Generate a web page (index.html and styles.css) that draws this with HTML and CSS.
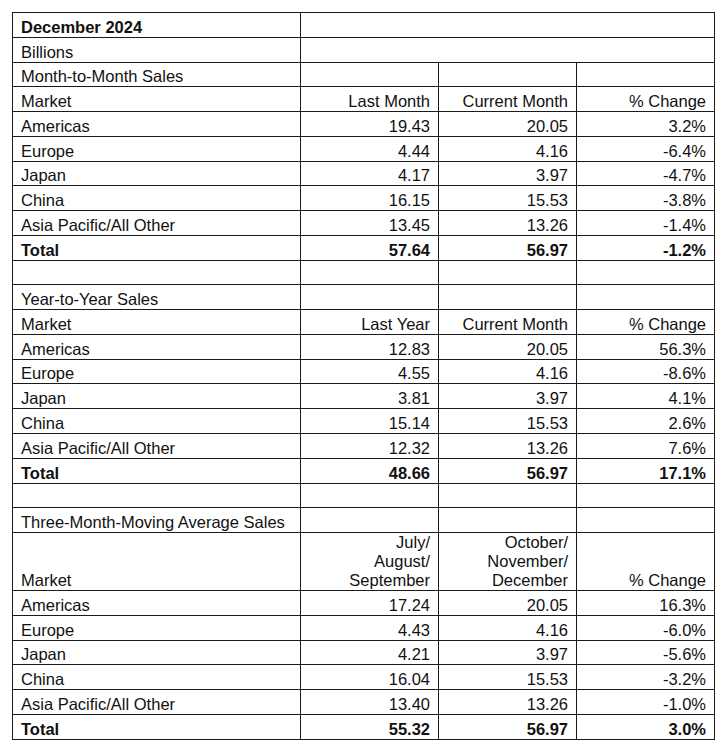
FILE: index.html
```html
<!DOCTYPE html>
<html lang="en">
<head>
    <meta charset="UTF-8">
    <title>December 2024</title>
    <link rel="stylesheet" href="styles.css">
</head>
<body>
<table class="sheet">
    <colgroup>
        <col class="c-market">
        <col class="c-num">
        <col class="c-num">
        <col class="c-num">
    </colgroup>
    <tr class="bold">
        <td>December 2024</td>
        <td colspan="3"></td>
    </tr>
    <tr>
        <td>Billions</td>
        <td colspan="3"></td>
    </tr>

    <!-- month to month -->
    <tr>
        <td>Month-to-Month Sales</td>
        <td></td><td></td><td></td>
    </tr>
    <tr>
        <td>Market</td>
        <td class="num">Last Month</td>
        <td class="num">Current Month</td>
        <td class="num">% Change</td>
    </tr>
    <tr><td>Americas</td><td class="num">19.43</td><td class="num">20.05</td><td class="num">3.2%</td></tr>
    <tr><td>Europe</td><td class="num">4.44</td><td class="num">4.16</td><td class="num">-6.4%</td></tr>
    <tr><td>Japan</td><td class="num">4.17</td><td class="num">3.97</td><td class="num">-4.7%</td></tr>
    <tr><td>China</td><td class="num">16.15</td><td class="num">15.53</td><td class="num">-3.8%</td></tr>
    <tr><td>Asia Pacific/All Other</td><td class="num">13.45</td><td class="num">13.26</td><td class="num">-1.4%</td></tr>
    <tr class="bold"><td>Total</td><td class="num">57.64</td><td class="num">56.97</td><td class="num">-1.2%</td></tr>
    <tr><td></td><td></td><td></td><td></td></tr>

    <!-- year to year -->
    <tr>
        <td>Year-to-Year Sales</td>
        <td></td><td></td><td></td>
    </tr>
    <tr>
        <td>Market</td>
        <td class="num">Last Year</td>
        <td class="num">Current Month</td>
        <td class="num">% Change</td>
    </tr>
    <tr><td>Americas</td><td class="num">12.83</td><td class="num">20.05</td><td class="num">56.3%</td></tr>
    <tr><td>Europe</td><td class="num">4.55</td><td class="num">4.16</td><td class="num">-8.6%</td></tr>
    <tr><td>Japan</td><td class="num">3.81</td><td class="num">3.97</td><td class="num">4.1%</td></tr>
    <tr><td>China</td><td class="num">15.14</td><td class="num">15.53</td><td class="num">2.6%</td></tr>
    <tr><td>Asia Pacific/All Other</td><td class="num">12.32</td><td class="num">13.26</td><td class="num">7.6%</td></tr>
    <tr class="bold"><td>Total</td><td class="num">48.66</td><td class="num">56.97</td><td class="num">17.1%</td></tr>
    <tr><td></td><td></td><td></td><td></td></tr>

    <!-- three month moving average -->
    <tr>
        <td>Three-Month-Moving Average Sales</td>
        <td></td><td></td><td></td>
    </tr>
    <tr class="tall">
        <td>Market</td>
        <td class="num">July/<br>August/<br>September</td>
        <td class="num">October/<br>November/<br>December</td>
        <td class="num">% Change</td>
    </tr>
    <tr><td>Americas</td><td class="num">17.24</td><td class="num">20.05</td><td class="num">16.3%</td></tr>
    <tr><td>Europe</td><td class="num">4.43</td><td class="num">4.16</td><td class="num">-6.0%</td></tr>
    <tr><td>Japan</td><td class="num">4.21</td><td class="num">3.97</td><td class="num">-5.6%</td></tr>
    <tr><td>China</td><td class="num">16.04</td><td class="num">15.53</td><td class="num">-3.2%</td></tr>
    <tr><td>Asia Pacific/All Other</td><td class="num">13.40</td><td class="num">13.26</td><td class="num">-1.0%</td></tr>
    <tr class="bold"><td>Total</td><td class="num">55.32</td><td class="num">56.97</td><td class="num">3.0%</td></tr>
</table>
</body>
</html>
```

FILE: styles.css
```css
* {
    padding: 0;
    margin: 0;
}

html, body {
    background: #FFFFFF;
}

body {
    padding: 12px 0 0 12px;
    font-family: "Liberation Sans", Arial, sans-serif;
    font-size: 16.5px;
    color: #111111;
}

.sheet {
    border-collapse: collapse;
    table-layout: fixed;
    width: 702px;
}

.c-market {
    width: 288px;
}

.c-num {
    width: 138px;
}

.sheet tr {
    height: 24.78px;
}

.sheet tr.tall {
    height: 57px;
}

.sheet td {
    border: 1px solid #1a1a1a;
    padding: 0 8px 0 8px;
    vertical-align: bottom;
    line-height: 19px;
    white-space: nowrap;
}

.sheet .num {
    text-align: right;
}

.bold td {
    font-weight: bold;
}
```
